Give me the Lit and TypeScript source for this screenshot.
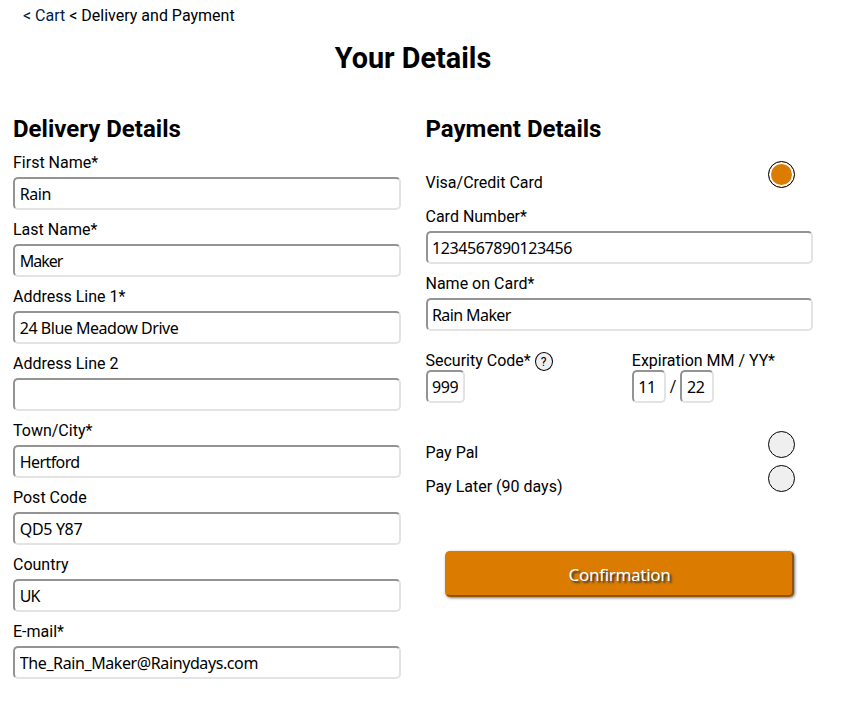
import { LitElement, html, css } from "lit";
import { customElement } from "lit/decorators.js";
import { styleMap } from "lit/directives/style-map.js";

interface Field {
  id: string;
  label: string;
  value: string;
  tracking?: number;
}

const delivery: Field[] = [
  { id: "first", label: "First Name*", value: "Rain", tracking: -0.45 },
  { id: "last", label: "Last Name*", value: "Maker", tracking: -1 },
  { id: "line1", label: "Address Line 1*", value: "24 Blue Meadow Drive", tracking: -0.48 },
  { id: "line2", label: "Address Line 2", value: "" },
  { id: "town", label: "Town/City*", value: "Hertford", tracking: -0.6 },
  { id: "post", label: "Post Code", value: "QD5 Y87", tracking: -0.35 },
  { id: "country", label: "Country", value: "UK", tracking: -0.9 },
  { id: "email", label: "E-mail*", value: "The_Rain_Maker@Rainydays.com", tracking: -0.4 },
];

const card: Field[] = [
  { id: "number", label: "Card Number*", value: "1234567890123456" },
  { id: "holder", label: "Name on Card*", value: "Rain Maker", tracking: -0.6 },
];

@customElement("app-root")
export class AppRoot extends LitElement {
  static styles = css`
    :host {
      display: block;
      box-sizing: border-box;
      height: 710px;
      overflow: hidden;
      background: #fff;
      color: #000;
      font: 16px/19px Roboto, sans-serif;
    }
    * { box-sizing: border-box; }
    .crumbs { padding: 6px 0 0 23px; }
    .crumbs a { color: #00214d; text-decoration: none; }
    h1 {
      width: 826px;
      margin: 16px 0 0;
      font-size: 28.8px;
      line-height: 34px;
      text-align: center;
    }
    .columns {
      display: grid;
      grid-template-columns: 388px 388px;
      column-gap: 24.5px;
      margin: 40px 0 0 13px;
    }
    h2 { margin: 0 0 10px; font-size: 24px; line-height: 28px; }
    .field { display: flex; flex-direction: column; gap: 5px; height: 67px; }
    input {
      width: 100%;
      height: 33px;
      margin: 0;
      padding: 0 4.8px;
      border: 2px solid;
      border-color: #949494 #e3e3e3 #e3e3e3 #949494;
      border-radius: 5px;
      background: #fff;
      color: #000;
      font: 16px "Noto Sans", sans-serif;
      letter-spacing: -0.4px;
      outline: none;
    }
    .payment .field input { width: 387px; }
    .payment input { padding: 0 4.5px; }
    .option { display: flex; justify-content: space-between; height: 34px; width: 369.5px; }
    .option label { padding-top: 12px; }
    .radio {
      width: 27px;
      height: 27px;
      border: 1px solid #000;
      border-radius: 50%;
      background: #efefef;
    }
    .radio.on { background: #db7b00; box-shadow: inset 0 0 0 2px #fff; }
    .first { margin-top: 18px; height: 46px; }
    .extras { display: flex; margin-top: 10px; height: 80px; }
    .security { width: 206.3px; }
    .caption { display: flex; gap: 4px; height: 19px; align-items: center; }
    .help {
      display: grid;
      place-items: center;
      width: 18px;
      height: 19px;
      margin-top: 2px;
      border: 1px solid #000;
      border-radius: 50%;
      background: #efefef;
      font-size: 12px;
      line-height: 14px;
    }
    .boxes { display: flex; align-items: center; gap: 4px; }
    .boxes input { width: 34px; }
    .boxes input.code { width: 39px; }
    button {
      display: block;
      width: 349px;
      height: 46px;
      margin: 52px 0 0 19.5px;
      padding: 0;
      border: 2px solid;
      border-color: #db7b00 #935300 #935300 #db7b00;
      border-radius: 5px;
      background: #db7b00;
      box-shadow: 1px 1px 3px rgba(0, 0, 0, 0.55);
      color: #fff;
      font: 17px "Noto Sans", sans-serif;
      letter-spacing: -0.3px;
      text-shadow: 2px 2px 2px #333;
    }
  `;

  private field(f: Field) {
    return html`<div class="field">
      <label for=${f.id}>${f.label}</label>
      <input id=${f.id} .value=${f.value} style=${styleMap(f.tracking === undefined ? {} : { letterSpacing: `${f.tracking}px` })} />
    </div>`;
  }

  private option(label: string, on = false) {
    return html`<div class="option"><label>${label}</label><span class="radio ${on ? "on" : ""}"></span></div>`;
  }

  render() {
    return html`
      <nav class="crumbs"><a>&lt; Cart</a> &lt; Delivery and Payment</nav>
      <h1>Your Details</h1>
      <main class="columns">
        <section>
          <h2>Delivery Details</h2>
          ${delivery.map((f) => this.field(f))}
        </section>
        <section class="payment">
          <h2>Payment Details</h2>
          <div class="first">${this.option("Visa/Credit Card", true)}</div>
          ${card.map((f) => this.field(f))}
          <div class="extras">
            <div class="security">
              <div class="caption"><label>Security Code*</label><span class="help">?</span></div>
              <div class="boxes"><input class="code" .value=${"999"} /></div>
            </div>
            <div>
              <div class="caption"><label>Expiration MM / YY*</label></div>
              <div class="boxes"><input .value=${"11"} /><span>/</span><input .value=${"22"} /></div>
            </div>
          </div>
          ${this.option("Pay Pal")} ${this.option("Pay Later (90 days)")}
          <button>Confirmation</button>
        </section>
      </main>
    `;
  }
}
